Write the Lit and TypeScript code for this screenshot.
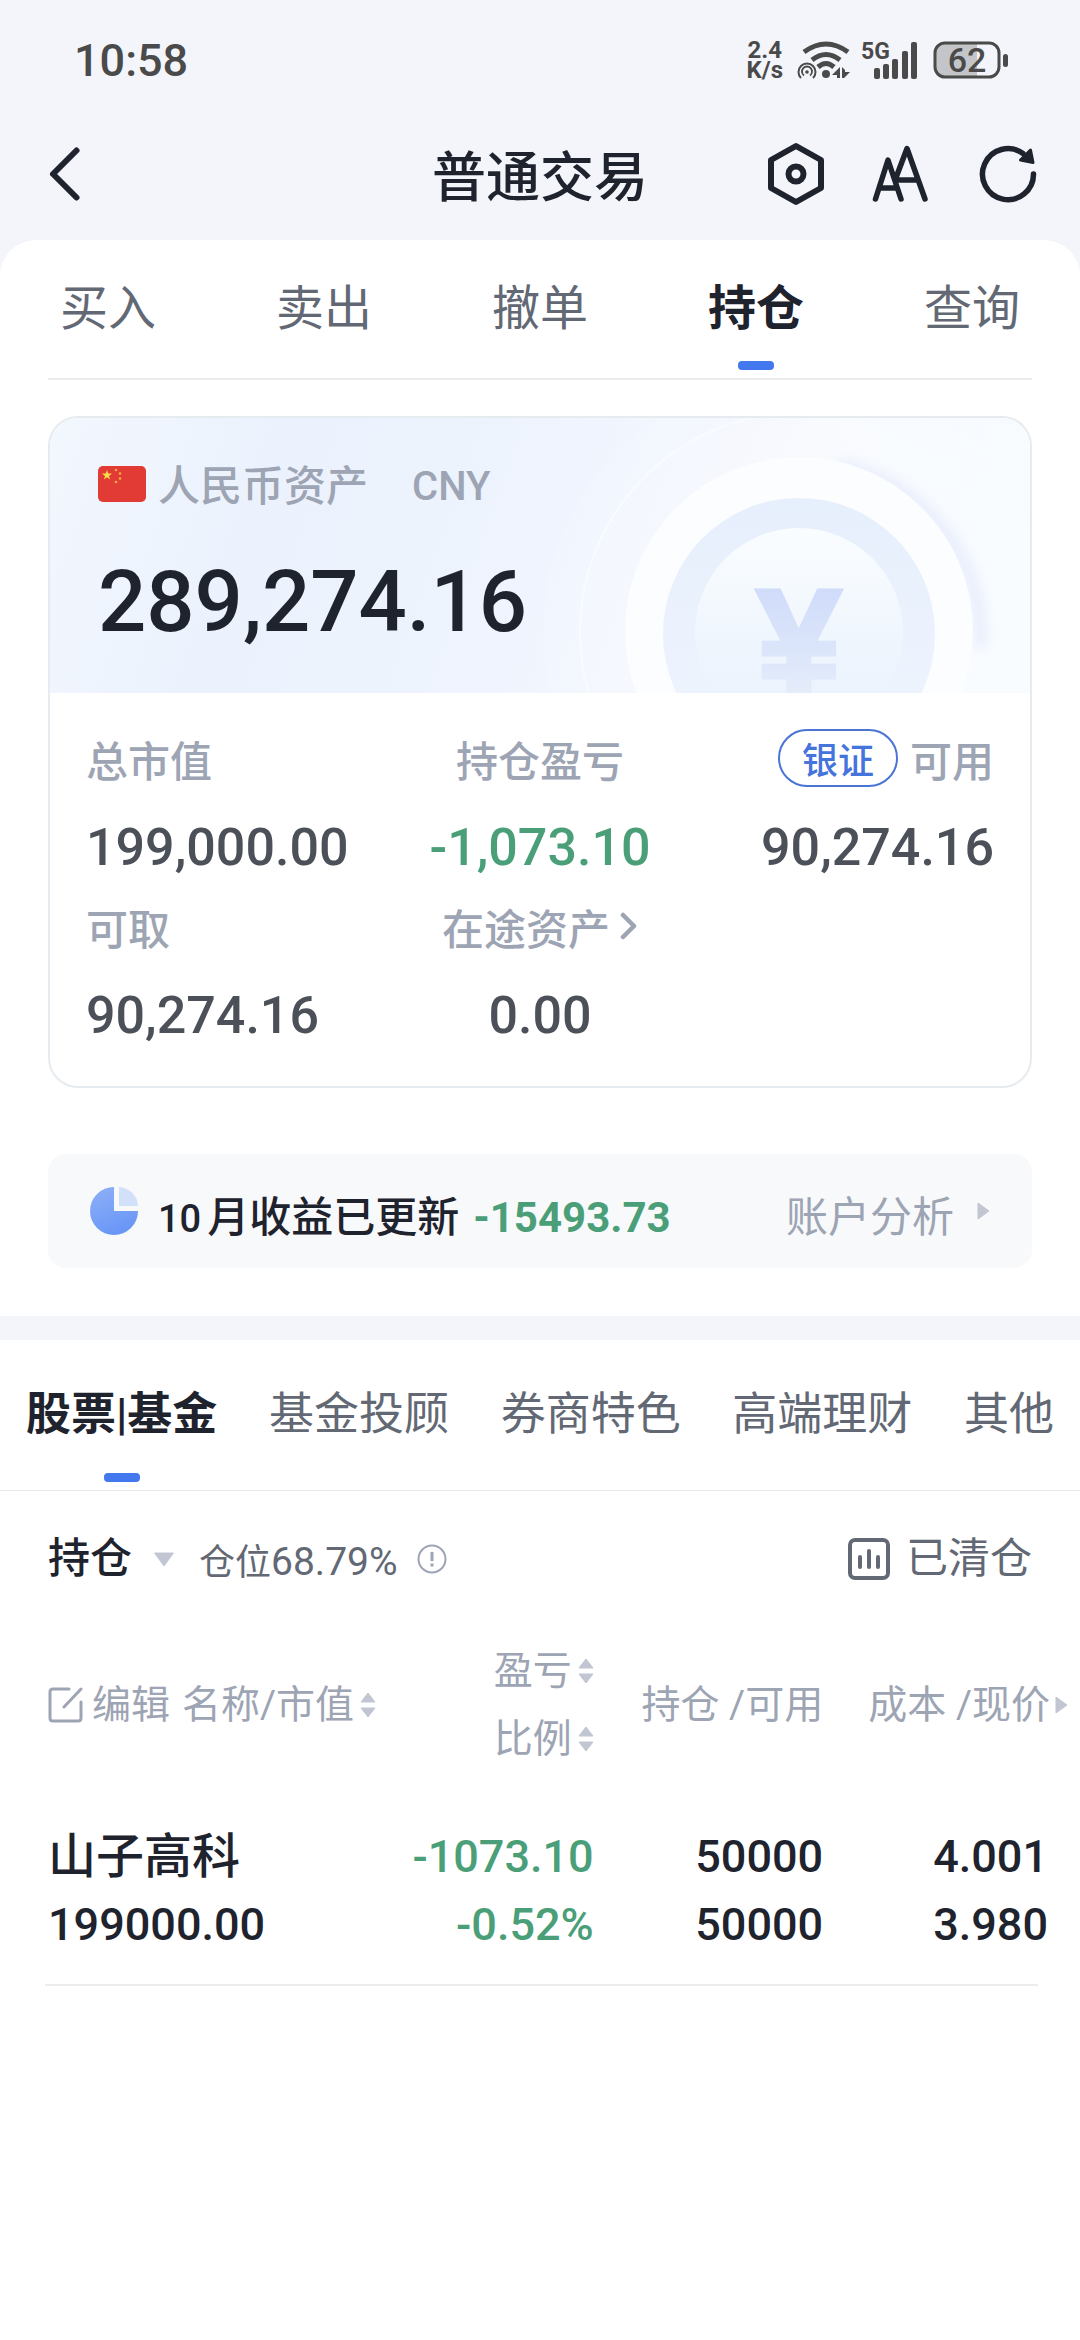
import { LitElement, html, css } from "lit";
import { customElement, property, state } from "lit/decorators.js";
import { classMap } from "lit/directives/class-map.js";

const base = css`
  :host {
    display: block;
    box-sizing: border-box;
    font-family: Roboto, "Noto Sans CJK SC", sans-serif;
    color: #1e232e;
  }
  *,
  *::before,
  *::after {
    box-sizing: border-box;
  }
  button {
    margin: 0;
    padding: 0;
    border: 0;
    background: none;
    font: inherit;
    color: inherit;
    cursor: pointer;
  }
  svg {
    display: block;
    flex: none;
  }
`;

@customElement("status-bar")
class StatusBar extends LitElement {
  static styles = [
    base,
    css`
      .bar {
        display: flex;
        align-items: center;
        height: 120px;
        padding: 0 71px 0 74px;
        color: #4a4a4a;
      }
      .time {
        flex: 1;
        font-size: 45px;
        font-weight: 500;
      }
      .rate {
        font-size: 24px;
        line-height: 20px;
        font-weight: 700;
        text-align: center;
        margin-right: 14px;
      }
      .wifi {
        margin-right: 10px;
      }
      .signal {
        margin-right: 15px;
        overflow: visible;
      }
      text {
        font-family: Roboto, sans-serif;
        fill: #4a4a4a;
      }
      .net {
        font-size: 23px;
        font-weight: 700;
      }
      .level {
        font-size: 34px;
        font-weight: 500;
      }
    `,
  ];

  render() {
    return html`
      <div class="bar">
        <div class="time">10:58</div>
        <div class="rate"><div>2.4</div><div>K/s</div></div>
        <svg class="wifi" width="54" height="38" viewBox="0 0 54 38" fill="none" stroke="#4a4a4a">
          <path d="M7 11Q29 -5 51 11" stroke-width="5" />
          <path d="M15 19Q29 8 43 19" stroke-width="5" />
          <path d="M21 26Q29 19 37 26" stroke-width="5" />
          <circle cx="29" cy="33" r="4" fill="#4a4a4a" stroke="none" />
          <path d="M4 37A8.5 8.5 0 1 1 16 37" stroke-width="2" />
          <path d="M7 34.500A5 5 0 1 1 13 34.500" stroke-width="1.800" />
          <circle cx="10" cy="31" r="1.800" fill="#4a4a4a" stroke="none" />
          <path d="M43 26V37H40V34H35L43 26ZM45 26L48 29V31H53L47 37H45Z" fill="#4a4a4a" stroke="none" />
        </svg>
        <svg class="signal" width="57" height="38" viewBox="0 0 57 38">
          <text class="net" x="0" y="18">5G</text>
          <g fill="#4a4a4a">
            <rect x="13" y="27" width="6" height="11" rx="2" />
            <rect x="22" y="23" width="6" height="15" rx="2" />
            <rect x="31" y="18" width="6" height="20" rx="2" />
            <rect x="41" y="10" width="6" height="28" rx="2" />
            <rect x="50" y="1" width="6" height="37" rx="2" />
          </g>
        </svg>
        <svg width="76" height="38" viewBox="0 0 76 38">
          <path d="M12 2H44V36H12Q2 36 2 26V12Q2 2 12 2Z" fill="#c4c5c9" />
          <rect x="2" y="2" width="64" height="34" rx="10" fill="none" stroke="#4a4a4a" stroke-width="3" />
          <rect x="70" y="13" width="5" height="13" rx="2.500" fill="#4a4a4a" />
          <text class="level" x="34" y="31" text-anchor="middle">62</text>
        </svg>
      </div>
    `;
  }
}

@customElement("title-bar")
class TitleBar extends LitElement {
  static styles = [
    base,
    css`
      .bar {
        display: grid;
        grid-template-columns: 1fr auto 1fr;
        align-items: center;
        height: 120px;
        padding: 0 40px 12px;
      }
      .title {
        margin: 0;
        font-size: 54px;
        line-height: 72px;
        font-weight: 500;
        padding-top: 10px;
      }
      .actions {
        display: flex;
        justify-content: flex-end;
        gap: 42px;
      }
    `,
  ];

  render() {
    return html`
      <header class="bar">
        <button aria-label="返回">
          <svg width="48" height="64" viewBox="0 0 48 64" fill="none" stroke="#1e232e" stroke-width="6" stroke-linecap="round" stroke-linejoin="round">
            <path d="M36.500 8.500L13 32L36.500 55.500" />
          </svg>
        </button>
        <h1 class="title">普通交易</h1>
        <div class="actions">
          <button aria-label="设置">
            <svg width="64" height="64" viewBox="0 0 64 64" fill="none" stroke="#1e232e" stroke-width="6" stroke-linejoin="round">
              <path d="M32 4L57 18V46L32 60L7 46V18Z" />
              <circle cx="32" cy="32" r="7.500" />
            </svg>
          </button>
          <button aria-label="字号">
            <svg width="64" height="64" viewBox="0 0 64 64" fill="none" stroke="#1e232e" stroke-width="5.500" stroke-linecap="round" stroke-linejoin="round">
              <path d="M5.500 57L18 18L31 57M10 46H26M25.500 37L37 6.500L55 57M28 38H48" />
            </svg>
          </button>
          <button aria-label="刷新">
            <svg width="64" height="64" viewBox="0 0 64 64" fill="none" stroke="#1e232e" stroke-width="5.500" stroke-linecap="round">
              <path d="M57.500 32A25.500 25.500 0 1 1 47 11.500" />
              <path d="M44.500 18L54.500 8L57 20.500Z" fill="#1e232e" stroke-width="3" stroke-linejoin="round" />
            </svg>
          </button>
        </div>
      </header>
    `;
  }
}

@customElement("tab-strip")
class TabStrip extends LitElement {
  @property({ attribute: false }) items: string[] = [];
  @property({ type: Number }) selected = 0;
  @property() variant = "main";

  static styles = [
    base,
    css`
      .tabs {
        display: flex;
        position: relative;
      }
      .tab {
        display: flex;
        flex-direction: column;
        align-items: center;
        line-height: 60px;
        color: #626874;
        white-space: nowrap;
        padding-bottom: 8px;
      }
      .tab::after {
        content: "";
        width: 36px;
        height: 9px;
        border-radius: 4px;
      }
      .on {
        color: #1e232e;
        font-weight: 700;
      }
      .on::after {
        background: #4478ef;
      }
      .main .tab {
        flex: 1;
        gap: 22px;
        padding-top: 39px;
        font-size: 48px;
      }
      .main::after {
        content: "";
        position: absolute;
        left: 48px;
        right: 48px;
        bottom: -2px;
        height: 2px;
        background: #ebecee;
      }
      .sub {
        justify-content: space-between;
        padding: 0 26px;
        border-bottom: 1px solid #e9eaec;
      }
      .sub .tab {
        gap: 28px;
        padding-top: 45px;
        font-size: 45px;
      }
    `,
  ];

  render() {
    return html`
      <div class="tabs ${this.variant}" role="tablist">
        ${this.items.map(
          (label, i) => html`
            <button
              role="tab"
              aria-selected=${i === this.selected}
              class=${classMap({ tab: true, on: i === this.selected })}
              @click=${() => (this.selected = i)}
            >${label}</button>
          `
        )}
      </div>
    `;
  }
}

@customElement("asset-card")
class AssetCard extends LitElement {
  static styles = [
    base,
    css`
      .card {
        border: 2px solid #e6ebf0;
        border-radius: 30px;
        overflow: hidden;
      }
      .head {
        position: relative;
        padding: 41px 48px;
        background: linear-gradient(110deg, #f3f7fe 0%, #ebf2fd 22%, #ecf3fd 38%, #f0f4fe 50%, #f6fafe 72%, #f8fcff 100%);
      }
      .coin {
        position: absolute;
        right: 0;
        top: 0;
      }
      .yen {
        font: 700 150px "Liberation Sans", sans-serif;
      }
      .currency {
        position: relative;
        display: flex;
        align-items: center;
        font-size: 42px;
        line-height: 56px;
        font-weight: 500;
        color: #9da4b3;
      }
      .flag {
        margin: 0 12px 6px 0;
      }
      .code {
        margin-left: 44px;
        font-size: 40px;
      }
      .total {
        position: relative;
        margin-top: 37px;
        font-size: 85px;
        line-height: 100px;
        font-weight: 500;
      }
      .grid {
        display: grid;
        grid-template-columns: repeat(3, 1fr);
        margin: 0;
        padding: 29px 36px 28px;
      }
      .cell {
        display: flex;
        flex-direction: column;
        align-items: center;
        gap: 12px;
      }
      .cell:nth-child(3n + 1) {
        align-items: flex-start;
      }
      .cell:nth-child(3n) {
        align-items: flex-end;
      }
      dt {
        display: flex;
        align-items: center;
        height: 72px;
        font-size: 42px;
        font-weight: 500;
        color: #9da4b3;
      }
      dd {
        margin: 0;
        font-size: 52px;
        line-height: 84px;
        font-weight: 500;
        color: #4c5059;
      }
      .down {
        color: #4b9f78;
      }
      .chip {
        height: 58px;
        padding: 0 22px;
        margin-right: 12px;
        border: 2px solid #4a74d6;
        border-radius: 29px;
        font-size: 36px;
        color: #4574dd;
      }
      .link {
        display: flex;
        align-items: center;
        gap: 10px;
      }
    `,
  ];

  render() {
    return html`
      <section class="card">
        <div class="head">
          <svg class="coin" width="492" height="275" viewBox="0 0 492 275">
            <defs>
              <linearGradient id="ring" x1="0" y1="0" x2="0" y2="1">
                <stop offset="0" stop-color="#e6effc" />
                <stop offset="1" stop-color="#f0f5fe" />
              </linearGradient>
              <linearGradient id="face" x1="0" y1="0" x2="0" y2="1">
                <stop offset="0" stop-color="#fafdff" />
                <stop offset="0.850" stop-color="#eaf2fd" />
              </linearGradient>
              <linearGradient id="ink" x1="0" y1="0" x2="0" y2="1">
                <stop offset="0.200" stop-color="#d0dcfa" />
                <stop offset="0.800" stop-color="#e4ecfa" />
              </linearGradient>
              <filter id="soft" x="-20%" y="-20%" width="140%" height="140%"><feGaussianBlur stdDeviation="6" /></filter>
            </defs>
            <circle cx="261" cy="214" r="256" fill="#fff" fill-opacity="0.120" />
            <circle cx="261" cy="214" r="219" fill="#fff" fill-opacity="0.120" stroke="#f8fcff" stroke-width="2" />
            <path d="M300 48A174 174 0 0 1 442 230" fill="none" stroke="#e9eefc" stroke-width="14" filter="url(#soft)" />
            <circle cx="261" cy="213" r="174" fill="#fbfdff" />
            <circle cx="261" cy="216" r="136" fill="url(#ring)" />
            <circle cx="261" cy="214" r="104" fill="url(#face)" />
            <text class="yen" x="261" y="276" text-anchor="middle" fill="url(#ink)" stroke="url(#ink)" stroke-width="5">¥</text>
          </svg>
          <div class="currency">
            <svg class="flag" width="48" height="36" viewBox="0 0 48 36">
              <rect width="48" height="36" rx="5" fill="#e23a34" />
              <path d="M9 4L10.200 7.600H14L11 9.900L12.100 13.500L9 11.300L5.900 13.500L7 9.900L4 7.600H7.800Z" fill="#f9dc4a" />
              <g fill="#f4b03f">
                <circle cx="18" cy="4" r="1.300" />
                <circle cx="22" cy="7.500" r="1.300" />
                <circle cx="22" cy="12.500" r="1.300" />
                <circle cx="18" cy="16" r="1.300" />
              </g>
            </svg>
            <span>人民币资产</span><span class="code">CNY</span>
          </div>
          <div class="total">289,274.16</div>
        </div>
        <dl class="grid">
          <div class="cell"><dt>总市值</dt><dd>199,000.00</dd></div>
          <div class="cell"><dt>持仓盈亏</dt><dd class="down">-1,073.10</dd></div>
          <div class="cell"><dt><button class="chip">银证</button>可用</dt><dd>90,274.16</dd></div>
          <div class="cell"><dt>可取</dt><dd>90,274.16</dd></div>
          <div class="cell">
            <dt>
              <button class="link">
                在途资产
                <svg width="18" height="28" viewBox="0 0 18 28" fill="none" stroke="#9da4b3" stroke-width="4.500" stroke-linecap="round" stroke-linejoin="round">
                  <path d="M3 3L14 14L3 25" />
                </svg>
              </button>
            </dt>
            <dd>0.00</dd>
          </div>
        </dl>
      </section>
    `;
  }
}

@customElement("profit-banner")
class ProfitBanner extends LitElement {
  static styles = [
    base,
    css`
      .banner {
        display: flex;
        align-items: center;
        height: 114px;
        padding: 0 42px;
        border-radius: 18px;
        background: #f8f9fb;
        color: inherit;
        text-decoration: none;
        font-size: 42px;
        font-weight: 500;
        white-space: nowrap;
      }
      .pie {
        margin-right: 20px;
      }
      .text {
        display: flex;
        flex: 1;
        align-items: baseline;
        padding-top: 4px;
      }
      .month {
        margin-right: 6px;
        font-size: 38px;
      }
      .amount {
        flex: 1;
        margin-left: 14px;
        font-weight: 700;
        color: #4b9f78;
      }
      .more {
        margin-right: 22px;
        font-weight: 400;
        color: #9da4b3;
      }
    `,
  ];

  render() {
    return html`
      <a class="banner" href="#analysis">
        <svg class="pie" width="48" height="48" viewBox="0 0 48 48">
          <defs>
            <linearGradient id="pie" x1="0" y1="0" x2="0.400" y2="1">
              <stop offset="0" stop-color="#8fb0f8" />
              <stop offset="1" stop-color="#6a97f6" />
            </linearGradient>
          </defs>
          <path d="M24 0A24 24 0 1 0 48 24H24Z" fill="url(#pie)" />
          <path d="M29 0A20 20 0 0 1 48 19H29Z" fill="#d2e0f9" />
        </svg>
        <span class="text">
          <span class="month">10</span><span>月收益已更新</span>
          <span class="amount">-15493.73</span>
          <span class="more">账户分析</span>
        </span>
        <svg width="14" height="18" viewBox="0 0 14 18"><path d="M2 1L13 9L2 17Z" fill="#c1c6d2" stroke="#c1c6d2" stroke-linejoin="round" /></svg>
      </a>
    `;
  }
}

@customElement("holdings-panel")
class HoldingsPanel extends LitElement {
  @state() private rows = [
    { name: "山子高科", value: "199000.00", profit: "-1073.10", ratio: "-0.52%", held: "50000", usable: "50000", cost: "4.001", price: "3.980" },
  ];

  static styles = [
    base,
    css`
      .filter {
        display: flex;
        align-items: center;
        height: 136px;
        padding: 0 48px;
      }
      .kind {
        display: flex;
        align-items: center;
        gap: 20px;
      }
      select {
        appearance: none;
        margin: 0;
        padding: 0;
        border: 0;
        background: none;
        font: inherit;
        font-size: 42px;
        font-weight: 500;
        line-height: 60px;
        color: #1e232e;
      }
      .ratio {
        margin: 0 19px 0 24px;
        font-size: 36px;
        color: #626874;
      }
      .percent {
        font-size: 39px;
      }
      .closed {
        display: flex;
        align-items: center;
        gap: 16px;
        margin-left: auto;
        font-size: 42px;
        line-height: 60px;
        color: #626874;
      }
      .frame {
        padding: 10px 12px 0 48px;
      }
      table {
        width: 100%;
        table-layout: fixed;
        border-collapse: collapse;
      }
      .c1 {
        width: 34%;
      }
      .c2 {
        width: 19.5%;
      }
      .c3 {
        width: 22.5%;
      }
      .c4 {
        width: 24%;
      }
      th {
        padding: 0;
        font-size: 39px;
        line-height: 68px;
        font-weight: 400;
        color: #9da4b3;
        white-space: nowrap;
      }
      .keys {
        display: flex;
        align-items: center;
        justify-content: flex-end;
      }
      .start {
        justify-content: flex-start;
      }
      .sort,
      .edit {
        display: flex;
        align-items: center;
        gap: 6px;
      }
      .edit {
        gap: 8px;
        margin-right: 12px;
      }
      .next {
        margin-left: 4px;
      }
      td {
        padding: 50px 0 25px;
        font-size: 45px;
        line-height: 68px;
        font-weight: 500;
        text-align: right;
        white-space: nowrap;
      }
      td:first-child {
        text-align: left;
      }
      td:last-child {
        padding-right: 20px;
      }
      .name {
        font-size: 48px;
      }
      .down {
        color: #4b9f78;
      }
      .rule {
        height: 2px;
        margin: 0 42px 0 45px;
        background: #ebecee;
      }
    `,
  ];

  private sortKey(label: string) {
    return html`
      <button class="sort">
        ${label}
        <svg width="16" height="26" viewBox="0 0 16 26" fill="#c1c6d2" stroke="#c1c6d2" stroke-linejoin="round">
          <path d="M8 1L15 10H1ZM8 25L15 16H1Z" />
        </svg>
      </button>
    `;
  }

  render() {
    return html`
      <div class="filter">
        <label class="kind">
          <select aria-label="持仓类型"><option>持仓</option></select>
          <svg width="22" height="16" viewBox="0 0 22 16"><path d="M1.500 2H20.500L11 15Z" fill="#c1c6d2" stroke="#c1c6d2" stroke-linejoin="round" /></svg>
        </label>
        <span class="ratio">仓位<span class="percent">68.79%</span></span>
        <button aria-label="仓位说明">
          <svg width="30" height="30" viewBox="0 0 30 30" fill="none" stroke="#9da4b3" stroke-width="2">
            <circle cx="15" cy="15" r="13.500" />
            <path d="M15 8V17M15 19.500V22.500" stroke-width="3" />
          </svg>
        </button>
        <button class="closed">
          <svg width="42" height="42" viewBox="0 0 42 42" fill="none" stroke="#626874" stroke-width="4" stroke-linecap="round">
            <rect x="2" y="2" width="38" height="38" rx="5" />
            <path d="M12 19V29M21 13V29M30 19V29" />
          </svg>
          已清仓
        </button>
      </div>
      <div class="frame">
        <table>
          <colgroup><col class="c1" /><col class="c2" /><col class="c3" /><col class="c4" /></colgroup>
          <thead>
            <tr>
              <th scope="col">
                <div class="keys start">
                  <button class="edit">
                    <svg width="36" height="36" viewBox="0 0 36 36" fill="none" stroke="#9da4b3" stroke-width="3" stroke-linecap="round" stroke-linejoin="round">
                      <path d="M21 2H5Q2 2 2 5V31Q2 34 5 34H30Q33 34 33 31V15M33 2L16 20" />
                    </svg>
                    编辑
                  </button>
                  ${this.sortKey("名称/市值")}
                </div>
              </th>
              <th scope="col">
                <div class="keys">${this.sortKey("盈亏")}</div>
                <div class="keys">${this.sortKey("比例")}</div>
              </th>
              <th scope="col"><div class="keys">持仓 /可用</div></th>
              <th scope="col">
                <div class="keys">
                  成本 /现价
                  <svg class="next" width="14" height="18" viewBox="0 0 14 18"><path d="M2 1L13 9L2 17Z" fill="#c1c6d2" stroke="#c1c6d2" stroke-linejoin="round" /></svg>
                </div>
              </th>
            </tr>
          </thead>
          <tbody>
            ${this.rows.map(
              (r) => html`
                <tr>
                  <td><div class="name">${r.name}</div><div>${r.value}</div></td>
                  <td class="down"><div>${r.profit}</div><div>${r.ratio}</div></td>
                  <td><div>${r.held}</div><div>${r.usable}</div></td>
                  <td><div>${r.cost}</div><div>${r.price}</div></td>
                </tr>
              `
            )}
          </tbody>
        </table>
      </div>
      <div class="rule"></div>
    `;
  }
}

@customElement("app-root")
class AppRoot extends LitElement {
  static styles = [
    base,
    css`
      :host {
        min-height: 100vh;
        background: linear-gradient(#f4f5fa 400px, #fff 400px);
      }
      .sheet {
        border-radius: 36px 36px 0 0;
        background: #fff;
      }
      .body {
        display: flex;
        flex-direction: column;
        gap: 66px;
        padding: 38px 48px 48px;
      }
      .band {
        height: 24px;
        background: #f4f5fa;
      }
    `,
  ];

  render() {
    return html`
      <status-bar></status-bar>
      <title-bar></title-bar>
      <main class="sheet">
        <tab-strip .items=${["买入", "卖出", "撤单", "持仓", "查询"]} .selected=${3}></tab-strip>
        <div class="body">
          <asset-card></asset-card>
          <profit-banner></profit-banner>
        </div>
        <div class="band"></div>
        <tab-strip variant="sub" .items=${["股票|基金", "基金投顾", "券商特色", "高端理财", "其他"]}></tab-strip>
        <holdings-panel></holdings-panel>
      </main>
    `;
  }
}
